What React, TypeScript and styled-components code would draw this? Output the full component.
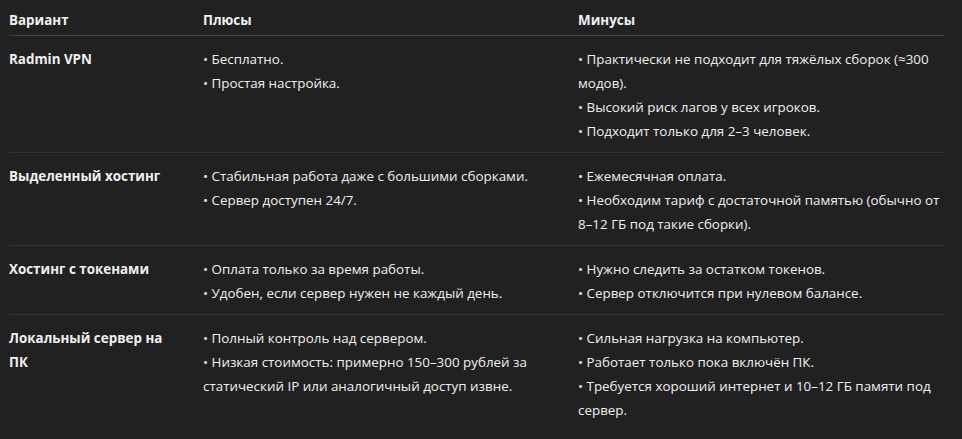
import styled, { createGlobalStyle } from "styled-components";

interface Row {
  name: string;
  pros: string[];
  cons: string[];
}

const rows: Row[] = [
  {
    name: "Radmin VPN",
    pros: ["Бесплатно.", "Простая настройка."],
    cons: [
      "Практически не подходит для тяжёлых сборок (≈300 модов).",
      "Высокий риск лагов у всех игроков.",
      "Подходит только для 2–3 человек.",
    ],
  },
  {
    name: "Выделенный хостинг",
    pros: ["Стабильная работа даже с большими сборками.", "Сервер доступен 24/7."],
    cons: [
      "Ежемесячная оплата.",
      "Необходим тариф с достаточной памятью (обычно от 8–12 ГБ под такие сборки).",
    ],
  },
  {
    name: "Хостинг с токенами",
    pros: ["Оплата только за время работы.", "Удобен, если сервер нужен не каждый день."],
    cons: ["Нужно следить за остатком токенов.", "Сервер отключится при нулевом балансе."],
  },
  {
    name: "Локальный сервер на ПК",
    pros: [
      "Полный контроль над сервером.",
      "Низкая стоимость: примерно 150–300 рублей за статический IP или аналогичный доступ извне.",
    ],
    cons: [
      "Сильная нагрузка на компьютер.",
      "Работает только пока включён ПК.",
      "Требуется хороший интернет и 10–12 ГБ памяти под сервер.",
    ],
  },
];

function App() {
  return (
    <>
      <Global />
      <Page>
        <Table>
          <thead>
            <tr>
              <Th $w={194}>Вариант</Th>
              <Th $w={375}>Плюсы</Th>
              <Th>Минусы</Th>
            </tr>
          </thead>
          <tbody>
            {rows.map((r) => (
              <Tr key={r.name}>
                <Name>{r.name}</Name>
                <Td>
                  {r.pros.map((p) => (
                    <Line key={p}>• {p}</Line>
                  ))}
                </Td>
                <Td $last>
                  {r.cons.map((c) => (
                    <Line key={c}>• {c}</Line>
                  ))}
                </Td>
              </Tr>
            ))}
          </tbody>
        </Table>
      </Page>
    </>
  );
}

export default App;

const Global = createGlobalStyle`
  body {
    margin: 0;
    background: #212121;
    color: #f0f0f0;
    font-family: "Open Sans", "Noto Sans", sans-serif;
    font-size: 13.4px;
  }
`;

const Page = styled.div`
  padding: 8px 18px 0 9px;
  height: 439px;
  box-sizing: border-box;
  overflow: hidden;
`;

const Table = styled.table`
  width: 935px;
  border-collapse: collapse;
  table-layout: fixed;
`;

const Th = styled.th<{ $w?: number }>`
  width: ${(p) => (p.$w ? `${p.$w}px` : "auto")};
  text-align: left;
  font-weight: 700;
  line-height: 24px;
  padding: 0 0 3px 0;
  border-bottom: 1px solid #424242;
`;

const Tr = styled.tr`
  & + & td {
    border-top: 1px solid #333333;
  }
`;

const Td = styled.td<{ $last?: boolean }>`
  vertical-align: top;
  padding: 11px ${(p) => (p.$last ? 0 : 12)}px 9px 0;
  line-height: 24px;
`;

const Name = styled(Td)`
  font-weight: 700;
  padding-right: 26px;
`;

const Line = styled.div``;
